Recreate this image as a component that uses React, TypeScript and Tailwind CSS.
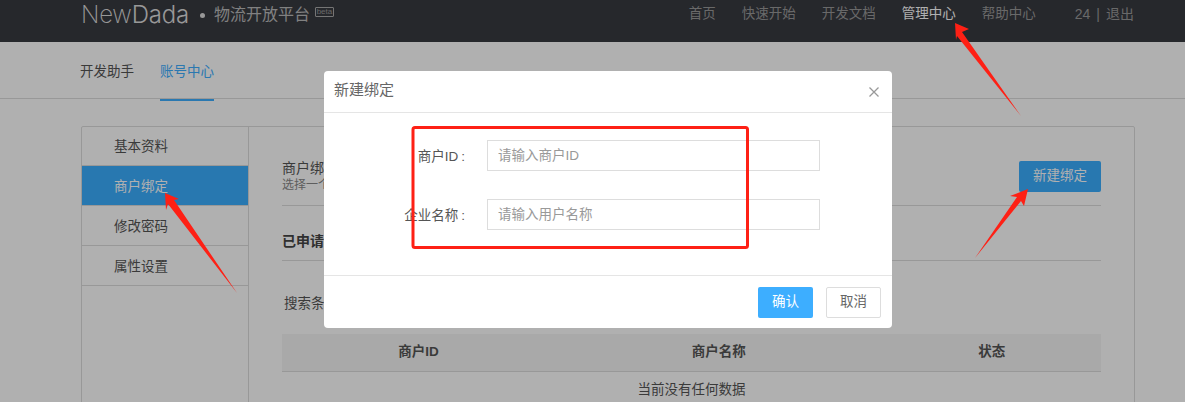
import React from "react";

const navItems = [
  { label: "首页" },
  { label: "快速开始" },
  { label: "开发文档" },
  { label: "管理中心", active: true },
  { label: "帮助中心" },
];

const sideItems = [
  { label: "基本资料" },
  { label: "商户绑定", active: true },
  { label: "修改密码" },
  { label: "属性设置" },
];

const Header = () => (
  <div className="flex h-[42px] shrink-0 items-start bg-[#383a41] pl-[81px] text-[#999]">
    <div className="flex h-[30px] items-center">
      <span className="font-['Inter',sans-serif] text-[24px] font-extralight leading-none tracking-[-0.2px] text-[#ddd]">
        New<span className="font-light">Dada</span>
      </span>
      <span className="ml-[11px] h-[5px] w-[5px] rounded-full bg-[#ddd]" />
      <span className="ml-[9px] text-base leading-none text-[#bbb]">物流开放平台</span>
      <span className="mb-[6px] ml-[5px] flex h-[10px] w-[19px] items-center justify-center rounded-[1px] border border-[#aaa] text-[8px] leading-none">
        beta
      </span>
    </div>
    <div className="ml-auto flex h-[28px] items-center text-[13.5px]">
      {navItems.map((item) => (
        <a key={item.label} className={`px-[13px] ${item.active ? "text-white" : ""}`}>
          {item.label}
        </a>
      ))}
      <span className="ml-[26px] mr-[51px] flex items-center text-sm">
        24<span className="mx-[6px]">|</span>退出
      </span>
    </div>
  </div>
);

const Tabs = () => (
  <div className="flex h-[57px] shrink-0 gap-[26px] border-b border-[#ddd] pl-20 text-[13.5px]">
    <a className="pt-[20px] text-[#555]">开发助手</a>
    <a className="h-[59px] border-b-2 border-[#3daeff] pt-[20px] text-[#3daeff]">账号中心</a>
  </div>
);

const Sidebar = () => (
  <div className="w-[167px] shrink-0 border-r border-[#ddd]">
    <div className="-mt-px">
      {sideItems.map((item) => (
        <div
          key={item.label}
          className={`flex h-[40px] items-center border-b border-[#ddd] pl-8 pt-[3px] text-[13.5px] ${
            item.active ? "bg-[#3aaeff] text-white" : "text-[#555]"
          }`}
        >
          {item.label}
        </div>
      ))}
    </div>
  </div>
);

const Content = () => (
  <div className="flex-1 pl-[33px] pr-[33px]">
    <div className="flex h-[79px] items-start border-b border-[#ddd] pt-[30px]">
      <div>
        <div className="mb-[3px] pt-[4px] text-sm leading-[15px] text-[#555]">商户绑定</div>
        <div className="text-xs leading-[13px] text-[#888]">选择一个商户进行绑定</div>
      </div>
      <button className="ml-auto mt-[4px] h-[31px] w-[82px] rounded-[2px] bg-[#3aaeff] text-[13.5px] text-white">
        新建绑定
      </button>
    </div>
    <div className="flex h-[55px] items-center border-b border-[#ddd] pt-4 text-sm font-bold text-[#444]">
      已申请绑定商户
    </div>
    <div className="flex h-[73px] items-center pl-[2px] pt-[14px] text-[13.5px] text-[#555]">搜索条件</div>
    <table className="w-full table-fixed border-collapse text-[13.5px] text-[#555]">
      <thead>
        <tr className="h-[37px] border-b border-[#ddd] bg-[#f5f5f5] font-bold">
          <th className="w-[33.33%]">商户ID</th>
          <th className="w-[40%]">商户名称</th>
          <th>状态</th>
        </tr>
      </thead>
      <tbody>
        <tr className="h-[37px]">
          <td colSpan={3} className="text-center">
            当前没有任何数据
          </td>
        </tr>
      </tbody>
    </table>
  </div>
);

const Field = ({ label, placeholder, top }: { label: string; placeholder: string; top: string }) => (
  <div className={`flex items-center ${top}`}>
    <label className="w-[141px] pt-[3px] text-right text-[13.5px] text-[#555]">
      {label}
      <span className="ml-[3px]">:</span>
    </label>
    <input
      placeholder={placeholder}
      className="ml-[22px] h-[31px] w-[333px] border border-[#ddd] pl-[10px] text-[13.5px] outline-none placeholder:text-[#999]"
    />
  </div>
);

const Modal = () => (
  <div className="absolute inset-0 bg-black/[0.31]">
    <div className="ml-[324px] mt-[71px] w-[568px] rounded-[4px] bg-white">
      <div className="flex h-[42px] items-center justify-between border-b border-[#e5e5e5] pl-[10px] pr-[12px]">
        <span className="pb-[2px] text-[15px] text-[#666]">新建绑定</span>
        <svg width="12" height="12" viewBox="0 0 12 12" className="text-[#999]">
          <path d="M1.5 1.5l9 9M10.5 1.5l-9 9" stroke="currentColor" strokeWidth="1.3" fill="none" />
        </svg>
      </div>
      <div className="h-[163px] border-b border-[#e5e5e5] pt-[27px]">
        <Field label="商户ID" placeholder="请输入商户ID" top="" />
        <Field label="企业名称" placeholder="请输入用户名称" top="mt-7" />
      </div>
      <div className="flex h-[52px] justify-end gap-[13px] pr-[11px] pt-[11px]">
        <button className="h-[31px] w-[55px] rounded-[2px] bg-[#3daeff] text-[13.5px] text-white">确认</button>
        <button className="h-[31px] w-[55px] rounded-[2px] border border-[#ddd] bg-white text-[13.5px] text-[#666]">
          取消
        </button>
      </div>
    </div>
  </div>
);

// hand-drawn annotations on top of the screenshot
const Annotations = () => (
  <svg className="absolute inset-0" width="1185" height="402" viewBox="0 0 1185 402">
    <g fill="#fe2015">
      <polygon points="955,23 969,29 962,32 1021,116 957,36 956,40" />
      <polygon points="165,193 179,199 174,200 237,293 168,204 166,210" />
      <polygon points="1028,189 1010,196 1017,197 975,258 1021,201 1024,206" />
    </g>
    <rect x="413" y="127.5" width="334.5" height="120" rx="2" fill="none" stroke="#fe2015" strokeWidth="3" />
  </svg>
);

export default function App() {
  return (
    <div className="relative flex h-[402px] w-[1185px] flex-col overflow-hidden bg-white font-['Liberation_Sans','Noto_Sans_CJK_SC',sans-serif]">
      <Header />
      <Tabs />
      <div className="ml-[81px] mr-[50px] mt-[27px] flex flex-1 rounded-t-[2px] border border-[#ddd]">
        <Sidebar />
        <Content />
      </div>
      <Modal />
      <Annotations />
    </div>
  );
}
